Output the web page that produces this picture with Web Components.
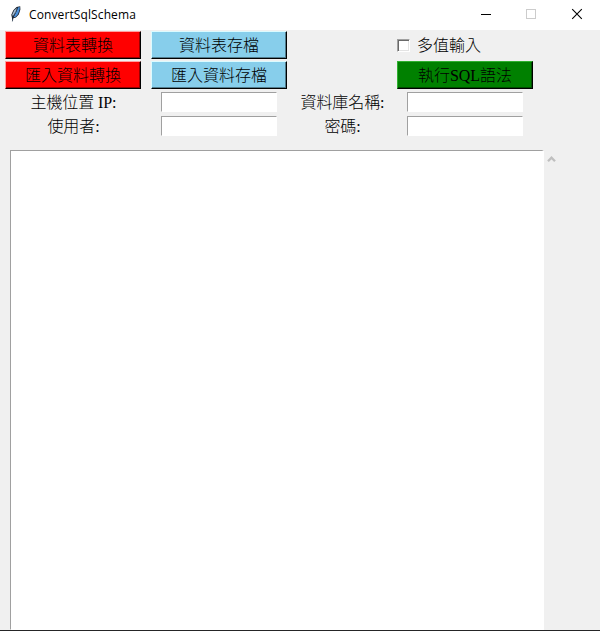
<!DOCTYPE html>
<html lang="zh-Hant">
<head>
<meta charset="utf-8">
<title>ConvertSqlSchema</title>
<style>
html,body{margin:0;height:100%;overflow:hidden;background:#f0f0f0}
</style>
</head>
<body>
<app-window></app-window>
<script>
const define = (name, html) => customElements.define(name, class extends HTMLElement {
  constructor() {
    super();
    this.attachShadow({mode: 'open'}).innerHTML = html;
  }
});

define('title-bar', `
<style>
:host{display:flex;align-items:center;height:30px;background:#fff;box-sizing:border-box;flex:none;
 font:12px/30px "Open Sans","Noto Sans",sans-serif;color:#000}
.logo{width:16px;height:18px;margin:0 5px 2px 8px;flex:none}
.name{flex:1;white-space:nowrap;letter-spacing:.11px}
.btn{width:46px;height:30px;display:block;flex:none}
</style>
<svg class="logo" viewBox="0 0 16 18">
 <path d="M4.2 16.6 4 13 3.3 9.7 5.3 5.2 8.6 2.1 12.2 1.2 12.4 4.5 10.8 9.4 7.9 12.4 5.2 13.2Z" fill="#17202c"/>
 <path d="M4.8 11.6 4.3 9.5 6.1 5.6 8.9 3.1 7.9 7.2Z" fill="#a9c0d6"/>
 <path d="M5.6 12.2 8.3 7 10 2.6 11.8 2 11.6 4.6 10.1 9 7.8 11.7Z" fill="#4a90dc"/>
 <path d="M4.4 16.4 5.2 11.5 9.5 3.5" fill="none" stroke="#263b50" stroke-width=".7"/>
</svg>
<span class="name"><slot></slot></span>
<svg class="btn" viewBox="0 0 46 30" shape-rendering="crispEdges"><path d="M19 14.5H29" stroke="#000"/></svg>
<svg class="btn" viewBox="0 0 46 30" shape-rendering="crispEdges"><rect x="18.5" y="9.5" width="9" height="9" fill="none" stroke="#ccc"/></svg>
<svg class="btn" viewBox="0 0 46 30"><path d="M18.2 9.2 27.8 18.8M27.8 9.2 18.2 18.8" stroke="#000" stroke-width="1.1"/></svg>
`);

define('tk-button', `
<style>
:host{display:block;box-sizing:border-box;width:136px;height:28px;background:var(--face);
 border:1px solid;border-color:var(--light) #000 #000 var(--light);
 box-shadow:inset -1px -1px var(--dark);text-align:center;line-height:27px;white-space:nowrap}
</style><slot></slot>`);

define('tk-label', `
<style>:host{display:block;text-align:center;line-height:24px;white-space:nowrap;
 letter-spacing:-.1px;padding:2px 0 0 1px}</style><slot></slot>`);

define('tk-entry', `
<style>
:host{display:block;box-sizing:border-box;width:116px;height:20px;background:#fff;
 border:1px solid;border-color:#a0a0a0 #fff #fff #a0a0a0}
</style>`);

define('tk-check', `
<style>
:host{display:flex;align-items:center;width:136px;height:28px;line-height:27px;white-space:nowrap}
i{box-sizing:border-box;width:13px;height:13px;margin-right:7px;background:#fff;
 border:1px solid;border-color:#a0a0a0 #fff #fff #a0a0a0;
 box-shadow:inset 1px 1px #696969,inset -1px -1px #e3e3e3}
</style><i></i><slot></slot>`);

define('tk-text', `
<style>
:host{display:flex;flex:1;margin:12px 0 0 10px;min-height:0}
.area{box-sizing:border-box;width:534px;background:#fff;border:1px solid;
 border-color:#a0a0a0 #fff #fff #a0a0a0;border-right-width:2px}
svg{width:17px;height:17px;flex:none}
</style>
<div class="area"></div>
<svg viewBox="0 0 17 17"><path d="M4 11.2 7.5 7.7 11 11.2" fill="none" stroke="#bfbfbf" stroke-width="2.3"/></svg>`);

define('app-window', `
<style>
:host{display:flex;flex-direction:column;box-sizing:border-box;width:600px;height:631px;background:#f0f0f0;
 border-bottom:1px solid #252526;color:#000;font:300 16px "Liberation Serif","Noto Sans CJK TC",serif}
.form{display:grid;grid-template-columns:146px 146px 100px 146px;grid-template-rows:30px 30px 24px 24px;
 align-items:center;justify-items:center;flex:none}
.red{--face:#f00;--light:#ff9f9f;--dark:#990000}
.sky{--face:#87ceeb;--light:#dcfbff;--dark:#517c8d}
.green{--face:#008000;--light:#30b030;--dark:#004d00}
.c3{grid-column:4}
</style>
<title-bar>ConvertSqlSchema</title-bar>
<div class="form">
 <tk-button class="red">資料表轉換</tk-button>
 <tk-button class="sky">資料表存檔</tk-button>
 <tk-check class="c3">多值輸入</tk-check>
 <tk-button class="red">匯入資料轉換</tk-button>
 <tk-button class="sky">匯入資料存檔</tk-button>
 <tk-button class="green c3">執行SQL語法</tk-button>
 <tk-label>主機位置 IP:</tk-label><tk-entry></tk-entry>
 <tk-label>資料庫名稱:</tk-label><tk-entry></tk-entry>
 <tk-label>使用者:</tk-label><tk-entry></tk-entry>
 <tk-label>密碼:</tk-label><tk-entry></tk-entry>
</div>
<tk-text></tk-text>
`);
</script>
</body>
</html>
